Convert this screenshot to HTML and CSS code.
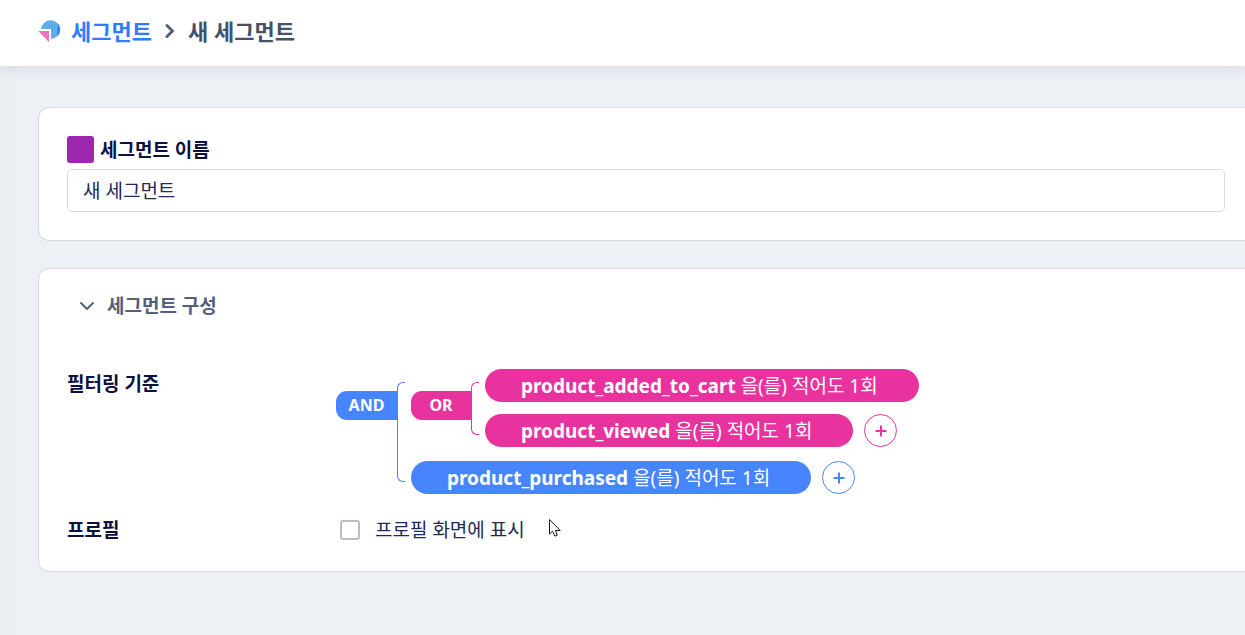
FILE: index.html
```html
<!DOCTYPE html>
<html lang="ko">
<head>
  <meta charset="UTF-8" />
  <meta name="viewport" content="width=device-width, initial-scale=1.0" />
  <title>새 세그먼트</title>
  <link rel="stylesheet" href="styles.css">
</head>
<body>
  <header class="topbar">
    <svg class="logo" viewBox="0 0 23 23" aria-hidden="true">
      <path d="M3.2 9A9.4 9.4 0 1 1 13 19V9Z" fill="#5eade4"/>
      <path d="M20 3.6A9.4 9.4 0 0 1 19 16.6Z" fill="#2f80f5"/>
      <path d="M0.3 11H11V22.3Z" fill="#ee72bd"/>
    </svg>
    <a href="#" class="crumb-link">세그먼트</a>
    <svg class="crumb-arrow" viewBox="0 0 10 16" aria-hidden="true"><path d="M2 2.5l5.5 5.5-5.5 5.5"/></svg>
    <h1>새 세그먼트</h1>
  </header>

  <main>
    <section class="card">
      <div class="name-label">
        <button type="button" class="swatch" aria-label="색상"></button>
        <label for="segment-name">세그먼트 이름</label>
      </div>
      <input type="text" id="segment-name" class="name-input" value="새 세그먼트">
    </section>

    <section class="card">
      <button type="button" class="section-toggle">
        <svg viewBox="0 0 16 10" aria-hidden="true"><path d="M2 2l6 6 6-6"/></svg>
        세그먼트 구성
      </button>

      <div class="row">
        <h2>필터링 기준</h2>
        <div class="group and">
          <button type="button" class="op">AND</button>
          <span class="bracket"></span>
          <div class="items">
            <div class="group or">
              <button type="button" class="op">OR</button>
              <span class="bracket"></span>
              <div class="items">
                <div class="item">
                  <button type="button" class="pill"><b>product_added_to_cart</b><span>을(를) 적어도 1회</span></button>
                </div>
                <div class="item">
                  <button type="button" class="pill"><b>product_viewed</b><span>을(를) 적어도 1회</span></button>
                  <button type="button" class="add" aria-label="조건 추가"><svg viewBox="0 0 12 12"><path d="M6 0.5v11M0.5 6h11"/></svg></button>
                </div>
              </div>
            </div>
            <div class="item">
              <button type="button" class="pill"><b>product_purchased</b><span>을(를) 적어도 1회</span></button>
              <button type="button" class="add" aria-label="조건 추가"><svg viewBox="0 0 12 12"><path d="M6 0.5v11M0.5 6h11"/></svg></button>
            </div>
          </div>
        </div>
      </div>

      <div class="row profile">
        <h2>프로필</h2>
        <label class="check"><input type="checkbox">프로필 화면에 표시</label>
      </div>
    </section>
  </main>

  <svg class="cursor" viewBox="0 0 14 20" aria-hidden="true">
    <path d="M1.5 1.5V16L4.5 13.2L7 18.2L9.2 17.2L7.5 12.5H12.2Z"/>
  </svg>
</body>
</html>
```
FILE: styles.css
```css
* {
  box-sizing: border-box;
}
body {
  margin: 0;
  min-height: 100vh;
  background: linear-gradient(to right, #e9eef2, #edf0f5 20px);
  color: #0b1240;
  font-family: "Noto Sans", "Noto Sans CJK KR", sans-serif;
  font-size: 19px;
  line-height: 28px;
  overflow-x: hidden;
}
button, input {
  font: inherit;
  color: inherit;
}
button {
  border: none;
  padding: 0;
  cursor: pointer;
}
h1, h2 {
  margin: 0;
}
svg {
  display: block;
  flex: none;
}

/* breadcrumb */
.topbar {
  display: flex;
  align-items: center;
  height: 66px;
  padding: 0 38px 4px;
  background: #fff;
  box-shadow: 0 2px 14px rgba(30, 40, 60, 0.12);
  font-size: 22px;
  font-weight: 600;
}
.topbar h1 {
  font-size: 22px;
  font-weight: 600;
  color: #44516a;
}
.logo {
  width: 23px;
  height: 23px;
}
.crumb-link {
  margin-left: 10px;
  color: #2f7dff;
  text-decoration: none;
}
.crumb-arrow {
  width: 10px;
  height: 16px;
  margin: 0 13px;
}
.crumb-arrow path, .section-toggle path {
  fill: none;
  stroke: #55607a;
  stroke-width: 2;
  stroke-linecap: round;
  stroke-linejoin: round;
}
.crumb-arrow path {
  stroke-width: 3;
}

main {
  display: flex;
  flex-direction: column;
  gap: 27px;
  padding: 41px 0 40px 38px;
}
.card {
  background: #fff;
  border: 1px solid #d8dae2;
  border-right: none;
  border-radius: 11px 0 0 11px;
  padding: 28px 20px 28px 28px;
}

.name-label {
  display: flex;
  align-items: flex-start;
  gap: 6px;
  margin-bottom: 5px;
  font-weight: 600;
}
.swatch {
  width: 27px;
  height: 27px;
  border-radius: 3px;
  background: #9b27af;
}
.name-input {
  display: block;
  width: 100%;
  height: 43px;
  padding: 0 15px 2px;
  border: 1px solid #d8dae2;
  border-radius: 5px;
  background: #fff;
  color: #232a55;
}

.section-toggle {
  display: flex;
  align-items: center;
  gap: 12px;
  margin: -5px 0 49px 12px;
  background: none;
  color: #55607a;
  font-weight: 600;
}
.section-toggle svg {
  width: 16px;
  height: 10px;
}

.row {
  display: flex;
  align-items: flex-start;
  line-height: 30px;
}
.row h2 {
  width: 269px;
  flex: none;
  font-size: 19px;
  font-weight: 600;
}

/* condition tree */
.group {
  display: flex;
  align-items: flex-start;
}
.and {
  --tone: #4785ff;
}
.or {
  --tone: #e8339e;
}
.op {
  width: 61px;
  height: 29px;
  margin-top: 22px;
  border-radius: 11px 0 0 11px;
  background: var(--tone);
  color: #fff;
  font-size: 16px;
  font-weight: 700;
  line-height: 29px;
}
.or .op {
  width: 60px;
}
.bracket {
  align-self: stretch;
  width: 8px;
  margin: 13px 6px 12px 0;
  border: 1px solid var(--tone);
  border-right: none;
  border-radius: 6px 0 0 6px;
}
.items {
  display: flex;
  flex-direction: column;
  gap: 14px;
}
.or .items {
  gap: 12px;
}
.item {
  display: flex;
  gap: 11px;
}
.pill {
  display: flex;
  align-items: center;
  gap: 5px;
  height: 33px;
  padding: 0 41px 0 36px;
  border-radius: 17px;
  background: var(--tone);
  color: #fff;
  white-space: nowrap;
}
.pill b {
  font-weight: 700;
}
.add {
  display: flex;
  align-items: center;
  justify-content: center;
  width: 33px;
  height: 33px;
  border: 1px solid var(--tone);
  border-radius: 50%;
  background: #fff;
}
.add svg {
  width: 12px;
  height: 12px;
}
.add path {
  fill: none;
  stroke: var(--tone);
  stroke-width: 2;
}

.profile {
  margin: 21px 0 -2px;
}
.check {
  display: flex;
  align-items: center;
  gap: 15px;
  margin-left: 4px;
  color: #232a55;
}
.check input {
  appearance: none;
  width: 20px;
  height: 20px;
  margin: 0;
  border: 2px solid #b9bccb;
  border-radius: 3px;
  background: #fff;
}

.cursor {
  position: absolute;
  left: 548px;
  top: 518px;
  width: 14px;
  height: 20px;
  fill: #fff;
  stroke: #10131f;
  stroke-width: 1;
  pointer-events: none;
}
```
